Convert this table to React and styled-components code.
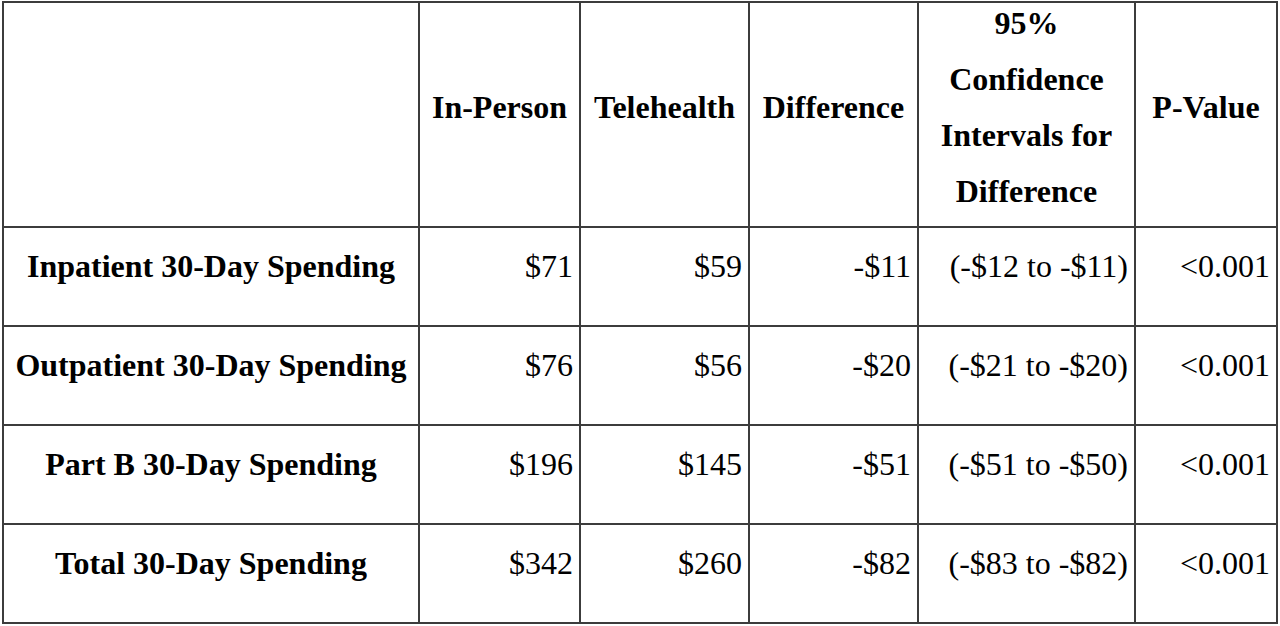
import React from "react";
import styled, { createGlobalStyle } from "styled-components";

const Global = createGlobalStyle`
  html, body { margin: 0; padding: 0; background: #fff; }
  body { font-family: "Liberation Serif", "Times New Roman", serif; color: #000; }
`;

const Table = styled.table`
  border-collapse: collapse;
  table-layout: fixed;
  width: 1276px;
  margin: 1px 0 0 2px;
  font-family: "Liberation Serif", "Times New Roman", serif;
  font-size: 32px;
`;

const HeadCell = styled.th`
  border: 2px solid #3c3c3c;
  padding: 0 0 16px 0;
  vertical-align: top;
  font-weight: bold;
  text-align: center;
`;

const HeadBox = styled.div`
  height: 207px;
  display: flex;
  align-items: center;
  justify-content: center;
  line-height: 56px;
  overflow: visible;
`;

const LabelCell = styled.th`
  border: 2px solid #3c3c3c;
  padding: 20px 4px 40px;
  height: 37px;
  line-height: 37px;
  vertical-align: top;
  font-weight: bold;
  text-align: center;
  white-space: nowrap;
`;

const ValueCell = styled.td`
  border: 2px solid #3c3c3c;
  padding: 20px 6px 40px 4px;
  height: 37px;
  line-height: 37px;
  vertical-align: top;
  text-align: right;
  white-space: nowrap;
`;

const columns = [416, 161, 169, 169, 217, 142];

const headers = [
  "",
  "In-Person",
  "Telehealth",
  "Difference",
  ["95%", "Confidence", "Intervals for", "Difference"],
  "P-Value",
];

const rows = [
  ["Inpatient 30-Day Spending", "$71", "$59", "-$11", "(-$12 to -$11)", "<0.001"],
  ["Outpatient 30-Day Spending", "$76", "$56", "-$20", "(-$21 to -$20)", "<0.001"],
  ["Part B 30-Day Spending", "$196", "$145", "-$51", "(-$51 to -$50)", "<0.001"],
  ["Total 30-Day Spending", "$342", "$260", "-$82", "(-$83 to -$82)", "<0.001"],
];

export default function App() {
  return (
    <>
      <Global />
      <Table>
        <colgroup>
          {columns.map((w, i) => (
            <col key={i} style={{ width: w }} />
          ))}
        </colgroup>
        <thead>
          <tr>
            {headers.map((h, i) => (
              <HeadCell key={i}>
                <HeadBox>
                  <div>
                    {Array.isArray(h)
                      ? h.map((line, j) => <div key={j}>{line}</div>)
                      : h}
                  </div>
                </HeadBox>
              </HeadCell>
            ))}
          </tr>
        </thead>
        <tbody>
          {rows.map((r, i) => (
            <tr key={i}>
              <LabelCell scope="row">{r[0]}</LabelCell>
              {r.slice(1).map((v, j) => (
                <ValueCell key={j}>{v}</ValueCell>
              ))}
            </tr>
          ))}
        </tbody>
      </Table>
    </>
  );
}
